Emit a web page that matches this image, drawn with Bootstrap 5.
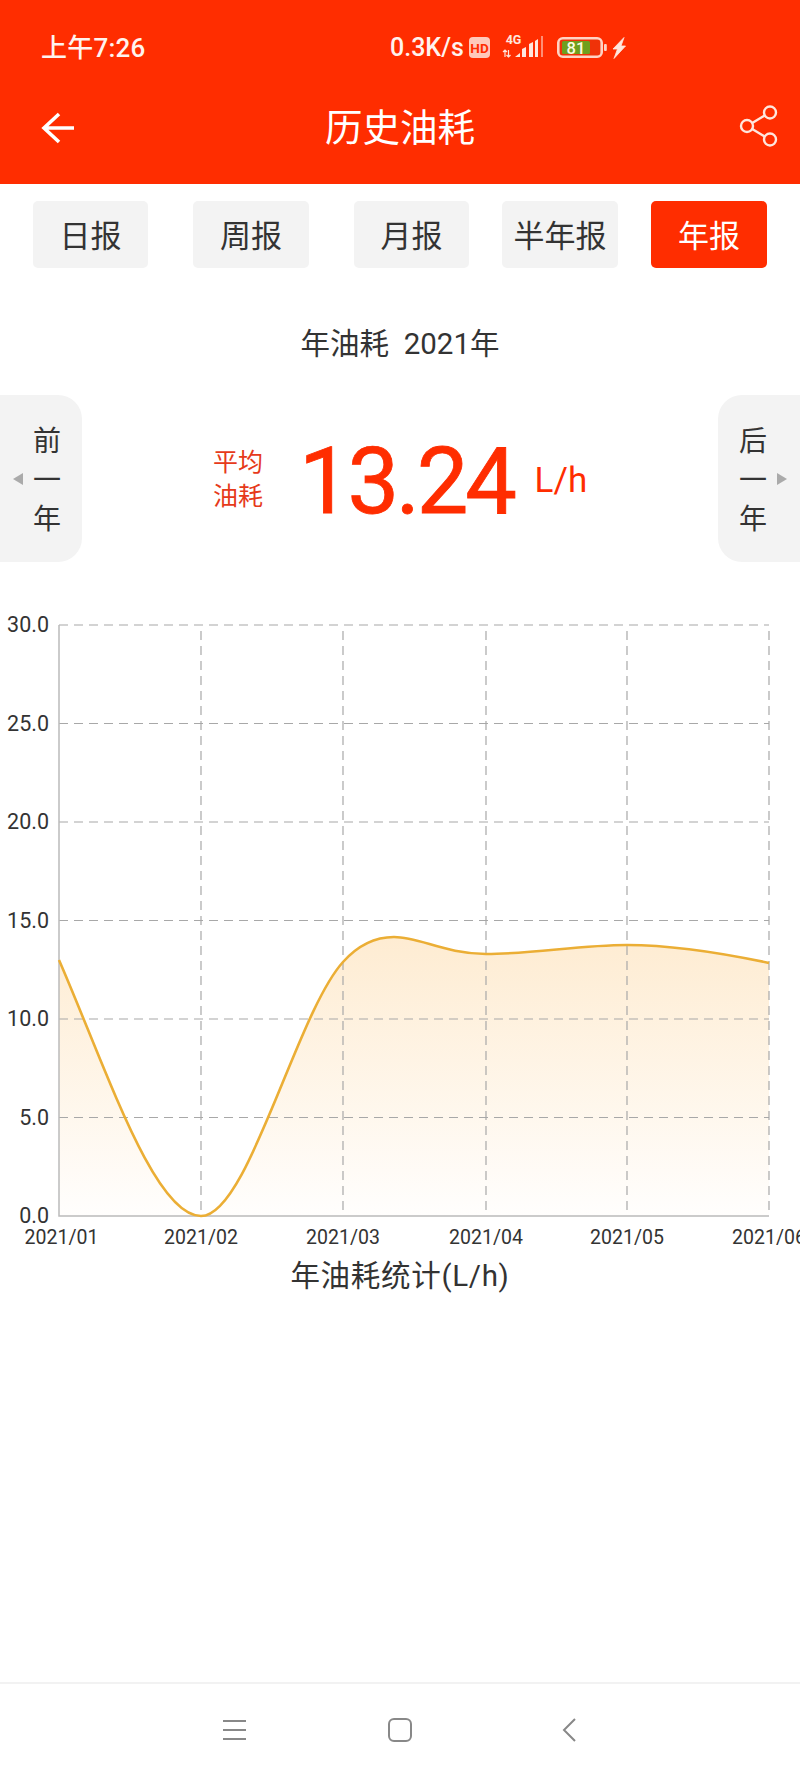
<!DOCTYPE html>
<html lang="zh">
<head>
<meta charset="utf-8">
<title>历史油耗</title>
<link href="https://cdn.jsdelivr.net/npm/bootstrap@5.3.0/dist/css/bootstrap.min.css" rel="stylesheet">
<style>
html,body{margin:0;background:#fff}
body{width:800px;min-height:1778px;font-family:Roboto,"Noto Sans CJK SC",sans-serif;color:#333;overflow:hidden}
.hdr{background:#ff2d00;color:#fff;height:184px}
.sbar{height:72px;padding:24px 0 0 41px}
.sclock{font-size:26px;font-weight:500;line-height:48px;color:#fff3ee;width:349px;letter-spacing:.2px}
.sspeed{font-size:25px;font-weight:500;line-height:48px;color:#fff3ee;width:78px}
.tbar{height:112px;padding:0 22px}
.tbar-end{width:57px;flex:none}
.tbar-back{padding-left:19px}
.tbar-title{font-size:37.500px;line-height:50px;font-weight:400}
.tabs{padding:17px 0 0 33px}
.tabbtn{height:67px;border:0;border-radius:5px;background:#f3f3f3;color:#333;font-size:31px;line-height:67px;padding:2px 0 0;white-space:nowrap}
.tabbtn:hover{background:#f3f3f3;color:#333}
.tabbtn-on,.tabbtn-on:hover{background:#ff2d00;color:#fff}
.tw1{width:115px}.tw2{width:116px}
.tg1{margin-left:45px}.tg2{margin-left:33px}
.subt{font-size:29.500px;line-height:40px;margin-top:56px;text-align:center;color:#333}
.statrow{height:167px;margin-top:31px}
.sidep{width:82px;height:167px;background:#f3f3f3;color:#333;font-size:28px;line-height:39px}
.sidep-l{border-radius:0 24px 24px 0;padding-left:13px}
.sidep-r{border-radius:24px 0 0 24px;padding-left:21px}
.sideword{width:28px;text-align:center;margin-top:4px}
.tri-l,.tri-r{width:0;height:0;border-top:6px solid transparent;border-bottom:6px solid transparent}
.tri-l{border-right:10px solid #aaa;margin-right:10px}
.tri-r{border-left:10px solid #aaa;margin-left:10px}
.statmid{padding-left:131px;color:#ff2d00}
.statlab{font-size:25px;line-height:34px;width:50px;color:#e63a1a;margin-top:3px}
.statnum{font-size:92px;line-height:100px;margin:6px 0 0 36px;letter-spacing:-3.300px;font-weight:400;-webkit-text-stroke:.8px #ff2d00}
.statunit{font-size:35px;line-height:40px;margin:4px 0 0 21px}
.plot{display:block;margin-top:38px}
.plot text{font-family:Roboto,sans-serif;fill:#333}
.ylab text{font-size:21.500px}
.xlab text{font-size:19.500px}
.plotcap{font-size:29.500px;line-height:40px;text-align:center;color:#333;letter-spacing:.7px}
.navb{height:96px;border-top:2px solid #f2f2f2;padding:0 0 2px 223px;gap:142px;margin-top:386px}
.navend{margin-left:8px}
</style>
</head>
<body>
<header class="hdr">
  <div class="sbar d-flex align-items-center">
    <span class="sclock">上午7:26</span>
    <span class="sspeed">0.3K/s</span>
    <svg width="168" height="36" viewBox="468 30 168 36" aria-hidden="true">
      <rect x="469" y="37" width="21" height="21" rx="4" fill="#ffc9ba"/>
      <text x="479.500" y="52.500" text-anchor="middle" font-family="Roboto" font-size="13.500" font-weight="700" fill="#ff2d00">HD</text>
      <text x="513.500" y="44" text-anchor="middle" font-family="Roboto" font-size="12.500" font-weight="700" fill="#ffe6dd">4G</text>
      <path d="M505 50v7M503 52l2-2 2 2M508.500 50v7M506.500 55l2 2 2-2" stroke="#ffe6dd" stroke-width="1.200" fill="none"/>
      <path d="M515 57l5-4v4zM522 57v-8l4-2v10zM529 57v-13l4-2v15zM535 57v-16l3-2v18z" fill="#ffe6dd"/>
      <path d="M541 36h2v21h-2z" fill="#ff8f75"/>
      <rect x="558.300" y="38.300" width="43.400" height="18.400" rx="4.500" fill="#f03208" stroke="#ffd3c4" stroke-width="2.600"/>
      <rect x="562" y="41" width="28" height="13" rx="1.500" fill="#6f9f1e"/>
      <rect x="604" y="44" width="2.800" height="7" rx="1" fill="#ffd3c4"/>
      <text x="576" y="53.500" text-anchor="middle" font-family="Roboto" font-size="16.500" font-weight="500" fill="#fffbe0">81</text>
      <path d="M624 37.500 613 49h4.500L614 58.500 625.500 46H621l3-8.500z" fill="#ffe6dd" stroke="#ffe6dd" stroke-width=".8"/>
    </svg>
  </div>
  <div class="tbar d-flex align-items-center justify-content-between">
    <span class="tbar-end tbar-back"><svg class="d-block" width="34" height="32" viewBox="0 0 34 32" aria-hidden="true"><path d="M18 2 3 16l15 14M3 16h30" fill="none" stroke="#fff" stroke-width="3.600"/></svg></span>
    <span class="tbar-title">历史油耗</span>
    <span class="tbar-end d-flex justify-content-end mb-1"><svg class="d-block" width="39" height="42" viewBox="0 0 39 42" aria-hidden="true" fill="none" stroke="#ffe6dd" stroke-width="2.400"><circle cx="31" cy="7.500" r="6"/><circle cx="31" cy="34.500" r="6"/><circle cx="8" cy="21" r="6"/><path d="M13.200 18 25.800 10.500M13.200 24l12.600 7.500"/></svg></span>
  </div>
</header>
<nav class="tabs d-flex">
  <button type="button" class="btn tabbtn tw1">日报</button>
  <button type="button" class="btn tabbtn tw2 tg1">周报</button>
  <button type="button" class="btn tabbtn tw1 tg1">月报</button>
  <button type="button" class="btn tabbtn tw2 tg2">半年报</button>
  <button type="button" class="btn tabbtn tabbtn-on tw2 tg2">年报</button>
</nav>
<div class="subt">年油耗&nbsp;&nbsp;2021年</div>
<section class="statrow d-flex">
  <div class="sidep sidep-l d-flex align-items-center">
    <span class="tri-l"></span><div class="sideword">前<br>一<br>年</div>
  </div>
  <div class="statmid flex-grow-1 d-flex align-items-center">
    <div class="statlab">平均<br>油耗</div>
    <div class="statnum">13.24</div>
    <div class="statunit">L/h</div>
  </div>
  <div class="sidep sidep-r d-flex align-items-center">
    <div class="sideword">后<br>一<br>年</div><span class="tri-r"></span>
  </div>
</section>
<svg class="plot" width="800" height="656" viewBox="0 600 800 656">
  <defs><linearGradient id="fillg" x1="0" y1="937" x2="0" y2="1216" gradientUnits="userSpaceOnUse"><stop offset="0" stop-color="#feecd2"/><stop offset="1" stop-color="#fffefd"/></linearGradient></defs>
  <path d="M59 960C106 1068 154 1216 201 1216C248 1216 296 1014 343 962C360 943 377 937 394 937C420 937 445 954 486 954C533 954 580 945 627 945C675 945 722 953 769 963V1216H59Z" fill="url(#fillg)"/>
  <g fill="none" stroke="#a8a8a8" stroke-width="1.200" stroke-dasharray="9 6">
    <path d="M59 625H769M59 723.500H769M59 822H769M59 920.500H769M59 1019H769M59 1117.500H769"/>
    <path stroke-dashoffset="9" d="M201 625V1216M343 625V1216M486 625V1216M627 625V1216M769 625V1216"/>
  </g>
  <path d="M59 625V1216H769" fill="none" stroke="#bbb" stroke-width="1.500"/>
  <path d="M59 960C106 1068 154 1216 201 1216C248 1216 296 1014 343 962C360 943 377 937 394 937C420 937 445 954 486 954C533 954 580 945 627 945C675 945 722 953 769 963" fill="none" stroke="#ebae35" stroke-width="2.600"/>
  <g class="ylab" text-anchor="end">
    <text x="49" y="632">30.0</text><text x="49" y="730.500">25.0</text><text x="49" y="829">20.0</text><text x="49" y="927.500">15.0</text><text x="49" y="1026">10.0</text><text x="49" y="1124.500">5.0</text><text x="49" y="1223">0.0</text>
  </g>
  <g class="xlab" text-anchor="middle">
    <text x="61.500" y="1244">2021/01</text><text x="201" y="1244">2021/02</text><text x="343" y="1244">2021/03</text><text x="486" y="1244">2021/04</text><text x="627" y="1244">2021/05</text><text x="769" y="1244">2021/06</text>
  </g>
</svg>
<div class="plotcap">年油耗统计(L/h)</div>
<footer class="navb d-flex align-items-center">
  <svg width="23" height="22" viewBox="0 0 23 22" aria-hidden="true"><path d="M0 2h23M0 11h23M0 20h23" stroke="#888" stroke-width="2"/></svg>
  <svg width="24" height="24" viewBox="0 0 24 24" aria-hidden="true"><rect x="1" y="1" width="22" height="22" rx="5" fill="none" stroke="#888" stroke-width="2"/></svg>
  <svg class="navend" width="14" height="24" viewBox="0 0 14 24" aria-hidden="true"><path d="M13 1 2 12l11 11" fill="none" stroke="#888" stroke-width="2"/></svg>
</footer>
<script src="https://cdn.jsdelivr.net/npm/bootstrap@5.3.0/dist/js/bootstrap.bundle.min.js"></script>
</body>
</html>
